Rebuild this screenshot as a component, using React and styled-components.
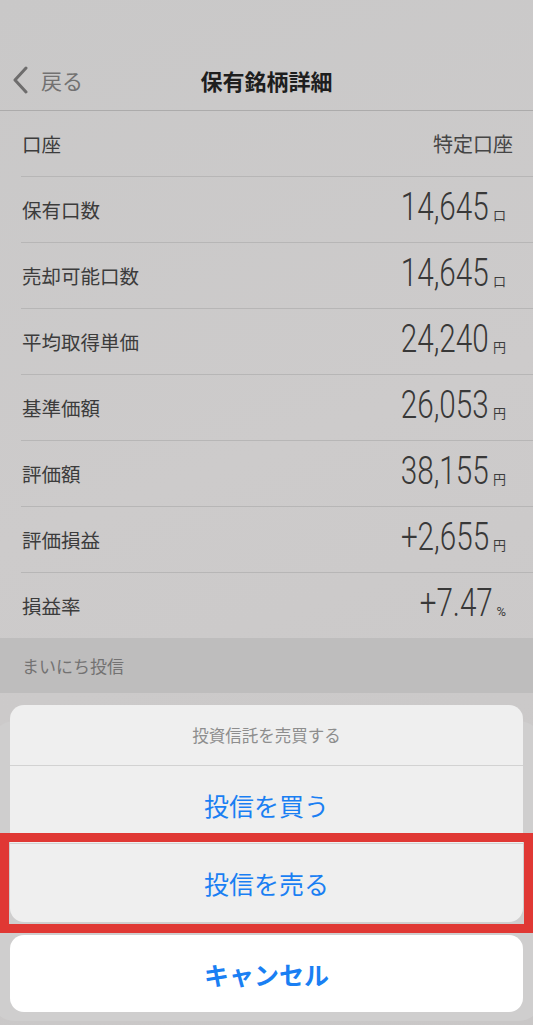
import React from "react";
import styled, { createGlobalStyle } from "styled-components";

const GlobalStyle = createGlobalStyle`
  html, body { margin: 0; padding: 0; }
  body {
    background: #c8c7c7;
    font-family: "Noto Sans CJK JP", "Noto Sans", sans-serif;
    -webkit-font-smoothing: antialiased;
  }
`;

const Screen = styled.div`
  position: relative;
  width: 533px;
  height: 1025px;
  overflow: hidden;
  background: linear-gradient(160deg, #c9c8c8 0%, #cdcbcb 45%, #c9c7c7 100%);
`;

const StatusSpace = styled.div`
  height: 50px;
`;

const NavBar = styled.div`
  display: grid;
  grid-template-columns: 1fr auto 1fr;
  align-items: center;
  height: 60px;
  border-bottom: 1px solid #acabab;
`;

const BackButton = styled.div`
  display: flex;
  align-items: center;
  gap: 11px;
  padding-left: 12px;
  color: #727171;
  font-size: 21px;
`;

const NavTitle = styled.div`
  font-size: 22px;
  font-weight: 700;
  color: #1e1e1e;
`;

const List = styled.div`
  display: flex;
  flex-direction: column;
`;

const Row = styled.div`
  margin-left: 21px;
  height: 65px;
  display: flex;
  align-items: center;
  justify-content: space-between;
  padding: 0 20px 0 1px;
  border-bottom: ${(p) => (p.$last ? "none" : "1px solid #b7b6b6")};
`;

const Label = styled.div`
  font-size: 19.5px;
  color: #3c3c3c;
`;

const TextValue = styled.div`
  font-size: 20px;
  color: #454545;
`;

const ValueGroup = styled.div`
  display: flex;
  align-items: baseline;
  margin-right: 7px;
  margin-top: -6px;
  color: #383838;
`;

const Number = styled.span`
  display: inline-block;
  font-family: "Roboto", sans-serif;
  font-weight: 300;
  font-size: 38px;
  line-height: 1;
  transform: scaleX(0.78);
  transform-origin: right center;
  margin-right: 4px;
`;

const Unit = styled.span`
  font-size: 13px;
  color: #3c3c3c;
  font-family: ${(p) => (p.$latin ? '"Roboto", sans-serif' : '"Noto Sans CJK JP", sans-serif')};
`;

const SectionHeader = styled.div`
  height: 55px;
  display: flex;
  align-items: center;
  padding-left: 22px;
  background: #bebdbd;
  font-size: 17px;
  color: #737272;
`;

const BehindCard = styled.div`
  margin: 28px -8px 0;
  height: 300px;
  border-radius: 22px;
  background: #cfcece;
`;

const Sheet = styled.div`
  position: absolute;
  left: 10px;
  right: 10px;
  bottom: 13px;
  display: flex;
  flex-direction: column;
  gap: 13px;
`;

const Group = styled.div`
  border-radius: 14px;
  overflow: hidden;
  background: ${(p) => (p.$solid ? "#ffffff" : "#efefef")};
  display: flex;
  flex-direction: column;
`;

const SheetTitle = styled.div`
  height: 60px;
  display: flex;
  align-items: center;
  justify-content: center;
  font-size: 16.5px;
  color: #8d8d8d;
  border-bottom: 1px solid #d2d2d2;
`;

const Action = styled.div`
  height: ${(p) => p.$h || 77}px;
  display: flex;
  align-items: center;
  justify-content: center;
  font-size: 25px;
  font-weight: ${(p) => (p.$bold ? 700 : 400)};
  color: #1a7ff3;
  border-bottom: ${(p) => (p.$divider ? "1px solid #d2d2d2" : "none")};
`;

const Highlight = styled.div`
  position: absolute;
  left: 0;
  top: 833px;
  width: 533px;
  height: 100px;
  box-sizing: border-box;
  border: 9px solid #e03834;
  pointer-events: none;
`;

const rows = [
  { label: "保有口数", value: "14,645", unit: "口" },
  { label: "売却可能口数", value: "14,645", unit: "口" },
  { label: "平均取得単価", value: "24,240", unit: "円" },
  { label: "基準価額", value: "26,053", unit: "円" },
  { label: "評価額", value: "38,155", unit: "円" },
  { label: "評価損益", value: "+2,655", unit: "円" },
  { label: "損益率", value: "+7.47", unit: "%", latin: true },
];

const Chevron = () => (
  <svg width="18" height="28" viewBox="0 0 18 28">
    <path d="M14 2 L3 14 L14 26" fill="none" stroke="#6e6d6d" strokeWidth="3" strokeLinecap="round" strokeLinejoin="round" />
  </svg>
);

export default function App() {
  return (
    <>
      <GlobalStyle />
      <Screen>
        <StatusSpace />
        <NavBar>
          <BackButton>
            <Chevron />
            <span>戻る</span>
          </BackButton>
          <NavTitle>保有銘柄詳細</NavTitle>
          <div />
        </NavBar>
        <List>
          <Row>
            <Label>口座</Label>
            <TextValue>特定口座</TextValue>
          </Row>
          {rows.map((r, i) => (
            <Row key={r.label} $last={i === rows.length - 1}>
              <Label>{r.label}</Label>
              <ValueGroup>
                <Number>{r.value}</Number>
                <Unit $latin={r.latin}>{r.unit}</Unit>
              </ValueGroup>
            </Row>
          ))}
        </List>
        <SectionHeader>まいにち投信</SectionHeader>
        <BehindCard />
        <Sheet>
          <Group>
            <SheetTitle>投資信託を売買する</SheetTitle>
            <Action $divider>投信を買う</Action>
            <Action $h={78}>投信を売る</Action>
          </Group>
          <Group $solid>
            <Action $bold>キャンセル</Action>
          </Group>
        </Sheet>
        <Highlight />
      </Screen>
    </>
  );
}
